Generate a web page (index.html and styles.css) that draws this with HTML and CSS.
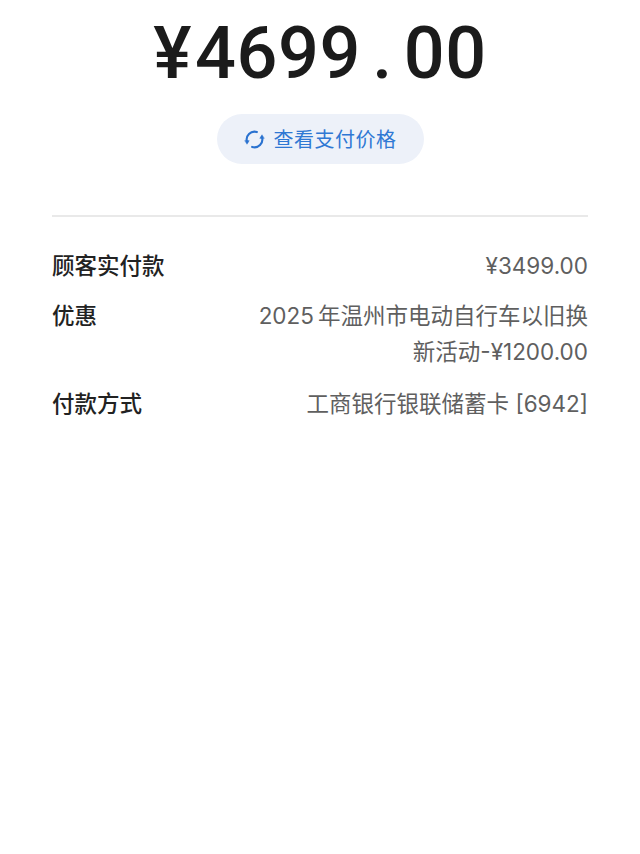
FILE: index.html
```html
<!DOCTYPE html>
<html lang="zh-CN">
<head>
<meta charset="utf-8">
<title>支付详情</title>
<link rel="stylesheet" href="styles.css">
</head>
<body>
<main class="page">
  <div class="amount"><span class="yen">¥</span>4699<span class="dot">.</span>00</div>
  <div class="pill-row">
    <div class="pill">
      <svg class="pill-icon" viewBox="0 0 22 22" fill="none" stroke="#2a72d0" stroke-width="2.2" stroke-linecap="round">
        <path d="M3.2 13.5A8.2 8.2 0 0 1 13.5 3.2"/>
        <path d="M18.8 8.5A8.2 8.2 0 0 1 8.5 18.8"/>
        <path d="M1.2 12.2H5.4L3.3 15.6Z" fill="#2a72d0" stroke-width="0.6" stroke-linejoin="round"/>
        <path d="M20.8 9.8H16.6L18.7 6.4Z" fill="#2a72d0" stroke-width="0.6" stroke-linejoin="round"/>
      </svg>
      <span class="pill-text">查看支付价格</span>
    </div>
  </div>
  <div class="divider"></div>
  <div class="rows">
    <div class="row"><div class="label">顾客实付款</div><div class="value">¥3499.00</div></div>
    <div class="row"><div class="label">优惠</div><div class="value">2025<span class="gap">年</span>温州市电动自行车以旧换<br>新活动-¥1200.00</div></div>
    <div class="row row-last"><div class="label">付款方式</div><div class="value">工商银行银联储蓄卡 [6942]</div></div>
  </div>
</main>
</body>
</html>
```

FILE: styles.css
```css
html, body { margin: 0; padding: 0; background: #fff; }
body { font-family: "Inter", "Noto Sans CJK SC", sans-serif; }
.page { width: 640px; height: 854px; padding: 0 52px; box-sizing: border-box; overflow: hidden; }
.amount {
  height: 114px; padding-top: 14px; box-sizing: border-box;
  text-align: center; font-family: "Roboto", "Noto Sans CJK SC", sans-serif;
  font-size: 72px; line-height: 80px; font-weight: 500; letter-spacing: 0.6px; color: #1b1b1b; white-space: nowrap;
}
.yen { margin-right: 3px; }
.dot { margin: 0 11px; }
.pill-row { display: flex; justify-content: center; }
.pill {
  width: 207px; height: 50px; border-radius: 25px; background: #edf1f9;
  display: flex; align-items: center; justify-content: center; gap: 9px;
}
.pill-icon { width: 21px; height: 21px; }
.pill-text { font-family: "Noto Sans CJK SC", sans-serif; font-size: 20px; letter-spacing: 0.5px; color: #2f78d4; line-height: 26px; }
.divider { height: 2px; background: #e9e9e9; margin-top: 51px; }
.rows { display: flex; flex-direction: column; gap: 14px; padding-top: 31px; }
.row { display: flex; justify-content: space-between; align-items: flex-start; }
.row-last { margin-top: 2px; }
.label { font-size: 22.5px; line-height: 36px; font-weight: 500; color: #222; white-space: nowrap; }
.value { font-size: 22.5px; line-height: 36px; color: #5f5f5f; text-align: right; white-space: nowrap; }
.gap { margin-left: 4px; }
```
